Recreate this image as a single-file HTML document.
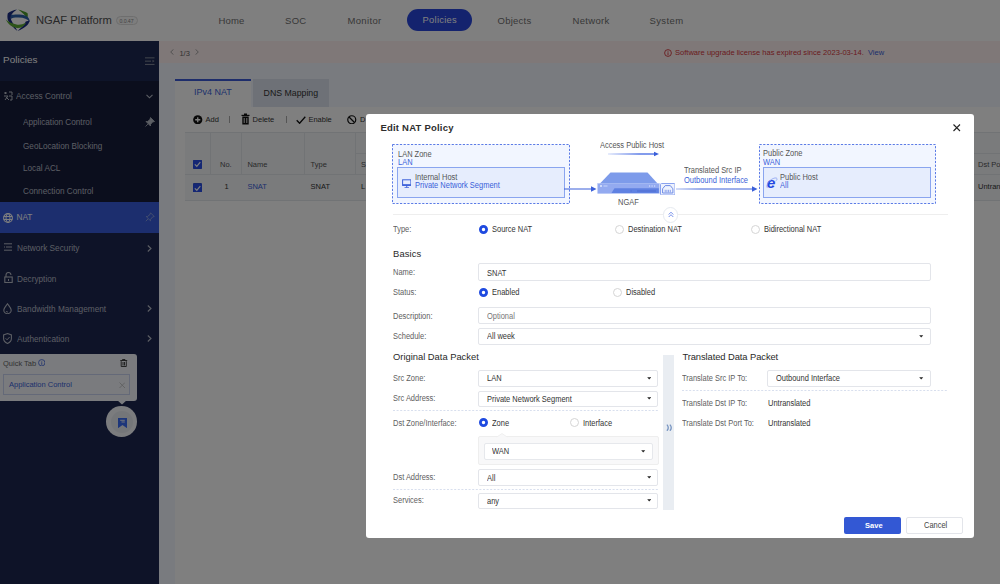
<!DOCTYPE html><html><head><meta charset="utf-8"><style>
html,body{margin:0;padding:0;width:1000px;height:584px;overflow:hidden;background:#fff;}
body{position:relative;font-family:"Liberation Sans",sans-serif;}
.t{position:absolute;white-space:nowrap;}
.b{position:absolute;box-sizing:border-box;}
</style></head><body>
<div class="b" style="left:0.00px;top:0.00px;width:1000.00px;height:41.00px;background:#ffffff;"></div>
<svg class="b" style="left:0px;top:5px;" width="40" height="32" viewBox="0 5 40 32"><path d="M17 9.6 C13.5 10.2 10 11.5 7.8 13.2 C7.2 15.5 7.3 18 7.9 20.2 C10.2 24.2 13.8 28.2 17.4 30.9 C15.5 27.2 12.6 23.4 11.2 20 C10.6 17.8 10.8 15.6 11.8 14.2 C13.3 12.3 15.2 11 17 9.6 Z" fill="#1a2d85"/><path d="M18.2 9.6 C21.8 10.6 25.2 11.8 27.6 13.2 C28 15.2 27.8 17 27.2 18.6 C25.6 15.5 22.2 12.4 18.2 9.6 Z" fill="#4d9a2c"/><path d="M10.8 15 C15 14 22.5 14.2 26.2 15.9 C28.6 17 29.8 19.2 29.6 22 C27.8 19.2 24 17.6 18.6 17.6 C14.8 17.5 12.3 18 10.8 19 Z" fill="#2a5fa8"/><path d="M29.6 20.5 C29.2 24.6 24.5 28.3 17.6 31 C21.2 27.8 24.6 24.8 25.8 21.6 Z" fill="#1a2d85"/><path d="M5.8 19.6 C7.8 24 12 27.4 17 28 C20.8 28.3 24 26.5 26.2 22.8 C22.4 24.6 19.4 25 16.4 24.5 C11.8 23.6 8 21.8 5.8 19.6 Z" fill="#5aa833"/></svg>
<div class="t " style="left:36.00px;top:14.83px;font-size:11.42px;line-height:11.42px;color:#505050;transform:scaleX(0.9814);transform-origin:0 0;">NGAF Platform</div>
<div class="b" style="left:116.00px;top:16.00px;width:21.50px;height:8.50px;border:1px solid #dcdcdc;border-radius:5px;background:#fafafa;"></div>
<div class="t " style="left:119.50px;top:18.70px;font-size:5.20px;line-height:5.20px;color:#888;letter-spacing:-0.076px;">0.0.47</div>
<div class="t " style="left:218.50px;top:16.26px;font-size:9.50px;line-height:9.50px;color:#707070;letter-spacing:0.165px;">Home</div>
<div class="t " style="left:285.00px;top:16.26px;font-size:9.50px;line-height:9.50px;color:#707070;letter-spacing:0.305px;">SOC</div>
<div class="t " style="left:347.50px;top:16.26px;font-size:9.50px;line-height:9.50px;color:#707070;letter-spacing:0.332px;">Monitor</div>
<div class="t " style="left:497.50px;top:16.26px;font-size:9.50px;line-height:9.50px;color:#707070;letter-spacing:0.256px;">Objects</div>
<div class="t " style="left:572.50px;top:16.26px;font-size:9.50px;line-height:9.50px;color:#707070;letter-spacing:0.308px;">Network</div>
<div class="t " style="left:649.50px;top:16.26px;font-size:9.50px;line-height:9.50px;color:#707070;letter-spacing:0.388px;">System</div>
<div class="b" style="left:407.00px;top:9.00px;width:65.00px;height:22.00px;background:#2846dc;border-radius:11px;"></div>
<div class="t " style="left:422.60px;top:16.43px;font-size:9.30px;line-height:9.30px;color:#ffffff;letter-spacing:0.294px;">Policies</div>
<div class="b" style="left:0.00px;top:41.00px;width:159.00px;height:543.00px;background:#1c2650;"></div>
<div class="b" style="left:0.00px;top:41.00px;width:159.00px;height:40.00px;background:#1c2852;"></div>
<div class="t " style="left:3.00px;top:55.43px;font-size:9.89px;line-height:9.89px;color:#ffffff;letter-spacing:0.053px;">Policies</div>
<svg class="b" style="left:145px;top:57px;" width="10" height="9" viewBox="0 0 10 9"><rect x="0" y="0.3" width="9.5" height="1.1" fill="#7d8394"/><rect x="0" y="3.6" width="6" height="1.1" fill="#7d8394"/><rect x="0" y="6.9" width="9.5" height="1.1" fill="#7d8394"/><path d="M7.5 2.8 L9.5 4.1 L7.5 5.4Z" fill="#7d8394"/></svg>
<div class="b" style="left:0.00px;top:81.00px;width:159.00px;height:121.00px;background:#161c3a;"></div>
<div class="t " style="left:16.40px;top:92.37px;font-size:8.66px;line-height:8.66px;color:#b8bcc8;transform:scaleX(0.9596);transform-origin:0 0;">Access Control</div>
<div class="t " style="left:22.60px;top:118.37px;font-size:8.66px;line-height:8.66px;color:#b8bcc8;transform:scaleX(0.9462);transform-origin:0 0;">Application Control</div>
<div class="t " style="left:22.60px;top:141.57px;font-size:8.66px;line-height:8.66px;color:#b8bcc8;transform:scaleX(0.9422);transform-origin:0 0;">GeoLocation Blocking</div>
<div class="t " style="left:22.60px;top:163.97px;font-size:8.66px;line-height:8.66px;color:#b8bcc8;transform:scaleX(0.9471);transform-origin:0 0;">Local ACL</div>
<div class="t " style="left:22.60px;top:187.17px;font-size:8.66px;line-height:8.66px;color:#b8bcc8;transform:scaleX(0.9493);transform-origin:0 0;">Connection Control</div>
<div class="b" style="left:0.00px;top:202.00px;width:159.00px;height:31.00px;background:#385cdc;"></div>
<div class="t " style="left:16.50px;top:214.12px;font-size:8.25px;line-height:8.25px;color:#ffffff;">NAT</div>
<div class="t " style="left:16.50px;top:244.37px;font-size:8.66px;line-height:8.66px;color:#b8bcc8;transform:scaleX(0.9547);transform-origin:0 0;">Network Security</div>
<div class="t " style="left:16.50px;top:274.77px;font-size:8.66px;line-height:8.66px;color:#b8bcc8;transform:scaleX(0.9516);transform-origin:0 0;">Decryption</div>
<div class="t " style="left:16.50px;top:304.87px;font-size:8.66px;line-height:8.66px;color:#b8bcc8;transform:scaleX(0.9548);transform-origin:0 0;">Bandwidth Management</div>
<div class="t " style="left:16.50px;top:335.07px;font-size:8.66px;line-height:8.66px;color:#b8bcc8;transform:scaleX(0.9526);transform-origin:0 0;">Authentication</div>
<div class="b" style="left:159.00px;top:41.00px;width:841.00px;height:543.00px;background:#f2f6ff;"></div>
<div class="b" style="left:159.00px;top:41.00px;width:841.00px;height:22.00px;background:#fff1f1;"></div>
<div class="t " style="left:179.40px;top:49.55px;font-size:7.50px;line-height:7.50px;color:#666;">1/3</div>
<div class="t " style="left:675.00px;top:48.61px;font-size:7.55px;line-height:7.55px;color:#d4363c;">Software upgrade license has expired since 2023-03-14.</div>
<div class="t " style="left:868.00px;top:48.65px;font-size:7.50px;line-height:7.50px;color:#3a5fd9;">View</div>
<div class="b" style="left:253.00px;top:79.00px;width:75.50px;height:28.00px;background:#dce2ee;"></div>
<div class="t " style="left:263.60px;top:89.09px;font-size:8.75px;line-height:8.75px;color:#333;">DNS Mapping</div>
<div class="b" style="left:175.00px;top:79.00px;width:76.00px;height:28.00px;background:#ffffff;border-top:2px solid #3d5bd6;"></div>
<div class="t " style="left:193.50px;top:88.40px;font-size:9.28px;line-height:9.28px;color:#3a5fd9;transform:scaleX(0.9680);transform-origin:0 0;">IPv4 NAT</div>
<div class="b" style="left:175.00px;top:107.00px;width:825.00px;height:477.00px;background:#ffffff;"></div>
<div class="t " style="left:205.60px;top:116.15px;font-size:7.50px;line-height:7.50px;color:#333;">Add</div>
<div class="t " style="left:252.60px;top:116.15px;font-size:7.50px;line-height:7.50px;color:#333;">Delete</div>
<div class="t " style="left:308.40px;top:116.15px;font-size:7.50px;line-height:7.50px;color:#333;">Enable</div>
<div class="b" style="left:185.00px;top:132.00px;width:815.00px;height:69.00px;background:#f4f6f9;border-top:1px solid #e3e6eb;border-bottom:1px solid #e3e6eb;"></div>
<div class="b" style="left:185.00px;top:174.00px;width:815.00px;height:1.00px;background:#e3e6eb;"></div>
<div class="b" style="left:209.60px;top:132.00px;width:1.00px;height:42.00px;background:#e3e6eb;"></div>
<div class="b" style="left:241.40px;top:132.00px;width:1.00px;height:42.00px;background:#e3e6eb;"></div>
<div class="b" style="left:304.40px;top:132.00px;width:1.00px;height:42.00px;background:#e3e6eb;"></div>
<div class="b" style="left:355.40px;top:132.00px;width:1.00px;height:42.00px;background:#e3e6eb;"></div>
<div class="b" style="left:355.40px;top:153.00px;width:644.60px;height:1.00px;background:#e3e6eb;"></div>
<div class="t " style="left:220.00px;top:160.75px;font-size:7.50px;line-height:7.50px;color:#555;">No.</div>
<div class="t " style="left:247.40px;top:160.75px;font-size:7.50px;line-height:7.50px;color:#555;">Name</div>
<div class="t " style="left:310.60px;top:160.75px;font-size:7.50px;line-height:7.50px;color:#555;">Type</div>
<div class="t " style="left:361.00px;top:160.75px;font-size:7.50px;line-height:7.50px;color:#555;">S</div>
<div class="t " style="left:224.40px;top:183.15px;font-size:7.50px;line-height:7.50px;color:#333;">1</div>
<div class="t " style="left:247.40px;top:183.15px;font-size:7.50px;line-height:7.50px;color:#3a5fd9;">SNAT</div>
<div class="t " style="left:310.60px;top:183.15px;font-size:7.50px;line-height:7.50px;color:#333;">SNAT</div>
<div class="t " style="left:361.00px;top:183.15px;font-size:7.50px;line-height:7.50px;color:#333;">L</div>
<div class="t " style="left:978.00px;top:160.75px;font-size:7.50px;line-height:7.50px;color:#555;">Dst Po</div>
<div class="t " style="left:978.00px;top:183.15px;font-size:7.50px;line-height:7.50px;color:#333;">Untranslated</div>
<div class="b" style="left:193.00px;top:160.00px;width:9.00px;height:9.00px;background:#3050d0;border-radius:1px;"></div>
<div class="b" style="left:193.00px;top:183.40px;width:9.00px;height:9.00px;background:#3050d0;border-radius:1px;"></div>
<div class="b" style="left:0.00px;top:353.50px;width:137.00px;height:47.50px;background:#f4f7fd;border-radius:0 3px 3px 0;"></div>
<div class="t " style="left:3.00px;top:359.95px;font-size:7.50px;line-height:7.50px;color:#666;">Quick Tab</div>
<div class="b" style="left:3.00px;top:374.00px;width:127.00px;height:21.00px;border:1px solid #c9d3f0;background:#f4f7fd;"></div>
<div class="t " style="left:9.00px;top:381.15px;font-size:7.50px;line-height:7.50px;color:#3a5fd9;">Application Control</div>
<div class="b" style="left:106.20px;top:406.40px;width:30.60px;height:30.60px;background:#f6f8fc;border-radius:50%;"></div>
<div class="b" style="left:110.50px;top:410.70px;width:22.00px;height:22.00px;background:#e9ecf2;border-radius:50%;"></div>
<svg class="b" style="left:117.5px;top:417.8px;" width="9" height="10.2" viewBox="0 0 9 10.2"><path d="M0 0 H9 V10.2 L4.5 7 L0 10.2 Z" fill="#3a6cf5"/><path d="M2.2 2.3h4.6M3.5 4h3.3" stroke="#f6f8fc" stroke-width="0.9"/></svg>
<svg class="b" style="left:3px;top:91px;" width="10" height="10" viewBox="0 0 10 10"><path d="M1 2h3M2.5 1v2M1 5h4L2 9M3 6l3 3M6 1h3v3M6 5h3v4h-2" fill="none" stroke="#b8bcc8" stroke-width="1"/></svg>
<svg class="b" style="left:146px;top:94px;" width="7" height="5" viewBox="0 0 7 5"><path d="M0.5 0.8 L3.5 3.8 L6.5 0.8" fill="none" stroke="#b8bcc8" stroke-width="1.1"/></svg>
<svg class="b" style="left:145px;top:117px;" width="10" height="10" viewBox="0 0 10 10"><path d="M5.5 0.5 L9.5 4.5 L7.5 5 L5.5 7.5 L5.5 9 L1 4.5 L2.5 4.5 L5 2.5 Z M3 7 L0.5 9.5" fill="#b8bcc8" stroke="#b8bcc8" stroke-width="0.8"/></svg>
<svg class="b" style="left:2.5px;top:213px;" width="10" height="10" viewBox="0 0 10 10"><circle cx="5" cy="5" r="4.4" fill="none" stroke="#fff" stroke-width="1.1"/><ellipse cx="5" cy="5" rx="2" ry="4.4" fill="none" stroke="#fff" stroke-width="1"/><path d="M0.8 3.5h8.4M0.8 6.5h8.4" stroke="#fff" stroke-width="1"/></svg>
<svg class="b" style="left:145px;top:212px;" width="10" height="10" viewBox="0 0 10 10"><path d="M5.5 0.8 L9.2 4.5 L7.5 5 L5.5 7.5 L5.5 8.8 L1.2 4.5 L2.5 4.5 L5 2.5 Z M3 7 L0.8 9.2" fill="none" stroke="#8fa3e0" stroke-width="0.9"/></svg>
<svg class="b" style="left:3.5px;top:243px;" width="8" height="8" viewBox="0 0 8 8"><path d="M0 0.8h8M2 4h6M0 7.2h8" stroke="#b8bcc8" stroke-width="1"/><path d="M0 4h1" stroke="#b8bcc8" stroke-width="1"/></svg>
<svg class="b" style="left:147px;top:244.5px;" width="5" height="7" viewBox="0 0 5 7"><path d="M0.8 0.5 L4 3.5 L0.8 6.5" fill="none" stroke="#b8bcc8" stroke-width="1.1"/></svg>
<svg class="b" style="left:147px;top:305px;" width="5" height="7" viewBox="0 0 5 7"><path d="M0.8 0.5 L4 3.5 L0.8 6.5" fill="none" stroke="#b8bcc8" stroke-width="1.1"/></svg>
<svg class="b" style="left:147px;top:335px;" width="5" height="7" viewBox="0 0 5 7"><path d="M0.8 0.5 L4 3.5 L0.8 6.5" fill="none" stroke="#b8bcc8" stroke-width="1.1"/></svg>
<svg class="b" style="left:3.5px;top:272px;" width="9" height="11" viewBox="0 0 9 11"><path d="M2 5 V3 A2.5 2.5 0 0 1 7 3" fill="none" stroke="#b8bcc8" stroke-width="1.1"/><rect x="0.8" y="5" width="7.4" height="5.5" fill="none" stroke="#b8bcc8" stroke-width="1.1"/><rect x="4" y="7" width="1" height="2" fill="#b8bcc8"/></svg>
<svg class="b" style="left:3px;top:303px;" width="9" height="11" viewBox="0 0 9 11"><path d="M4.5 0.8 C6 3 8.2 5 8.2 7 A3.7 3.7 0 0 1 0.8 7 C0.8 5 3 3 4.5 0.8 Z" fill="none" stroke="#b8bcc8" stroke-width="1.1"/><path d="M3 8 A1.8 1.8 0 0 0 5 9" fill="none" stroke="#b8bcc8" stroke-width="0.9"/></svg>
<svg class="b" style="left:3px;top:333px;" width="9" height="11" viewBox="0 0 9 11"><path d="M4.5 0.6 L8.4 2 V5.5 C8.4 8 6.5 9.6 4.5 10.4 C2.5 9.6 0.6 8 0.6 5.5 V2 Z" fill="none" stroke="#b8bcc8" stroke-width="1.1"/><path d="M2.6 5.3 L4.1 6.8 L6.6 4" fill="none" stroke="#b8bcc8" stroke-width="1"/></svg>
<svg class="b" style="left:170px;top:49px;" width="4" height="6" viewBox="0 0 4 6"><path d="M3.5 0.3 L0.7 3 L3.5 5.7" fill="none" stroke="#999" stroke-width="0.9"/></svg>
<svg class="b" style="left:195px;top:49px;" width="4" height="6" viewBox="0 0 4 6"><path d="M0.5 0.3 L3.3 3 L0.5 5.7" fill="none" stroke="#999" stroke-width="0.9"/></svg>
<svg class="b" style="left:663.5px;top:48.5px;" width="8" height="8" viewBox="0 0 8 8"><circle cx="4" cy="4" r="3.4" fill="none" stroke="#d4363c" stroke-width="0.9"/><path d="M4 3.3v2.8M4 1.9v0.8" stroke="#d4363c" stroke-width="0.9"/></svg>
<svg class="b" style="left:193px;top:114.5px;" width="9.5" height="9.5" viewBox="0 0 9.5 9.5"><circle cx="4.75" cy="4.75" r="4.6" fill="#111"/><path d="M4.75 2.2v5.1M2.2 4.75h5.1" stroke="#fff" stroke-width="1.3"/></svg>
<div class="b" style="left:229.20px;top:116.00px;width:0.70px;height:7.00px;background:#aaa;"></div>
<svg class="b" style="left:240.6px;top:113px;" width="9" height="12" viewBox="0 0 9 12"><rect x="0.5" y="1.8" width="8" height="1.2" fill="#111"/><rect x="3" y="0.5" width="3" height="1.5" fill="#111"/><rect x="1.3" y="3.5" width="6.4" height="8" fill="#111"/><path d="M3.2 5v5M5.8 5v5" stroke="#fff" stroke-width="0.9"/></svg>
<div class="b" style="left:285.50px;top:116.00px;width:0.70px;height:7.00px;background:#aaa;"></div>
<svg class="b" style="left:295.6px;top:115.5px;" width="10" height="8.5" viewBox="0 0 10 8.5"><path d="M0.7 4.2 L3.6 7.3 L9.3 0.8" fill="none" stroke="#111" stroke-width="1.3"/></svg>
<svg class="b" style="left:347.3px;top:114.5px;" width="9.5" height="9.5" viewBox="0 0 9.5 9.5"><circle cx="4.75" cy="4.75" r="4" fill="none" stroke="#111" stroke-width="1.2"/><path d="M2 2 L7.5 7.5" stroke="#111" stroke-width="1.2"/></svg>
<div class="t " style="left:359.90px;top:116.15px;font-size:7.50px;line-height:7.50px;color:#333;">D</div>
<svg class="b" style="left:193px;top:159.9px;" width="9" height="8.7" viewBox="0 0 9 8.7"><rect x="0" y="0" width="9" height="8.7" rx="1.3" fill="#2a4fe8"/><path d="M1.8 4.4 L3.8 6.3 L7.3 2.2" fill="none" stroke="#fff" stroke-width="1.2"/></svg>
<svg class="b" style="left:193px;top:183.8px;" width="9" height="8.7" viewBox="0 0 9 8.7"><rect x="0" y="0" width="9" height="8.7" rx="1.3" fill="#2a4fe8"/><path d="M1.8 4.4 L3.8 6.3 L7.3 2.2" fill="none" stroke="#fff" stroke-width="1.2"/></svg>
<svg class="b" style="left:37.8px;top:358.8px;" width="7.5" height="7.5" viewBox="0 0 7.5 7.5"><circle cx="3.75" cy="3.75" r="3.2" fill="none" stroke="#3a5fd9" stroke-width="0.8"/><path d="M3.75 3.2v2.6M3.75 1.9v0.7" stroke="#3a5fd9" stroke-width="0.8"/></svg>
<svg class="b" style="left:120.3px;top:359px;" width="7.5" height="8" viewBox="0 0 7.5 8"><path d="M0.3 1.5h6.9M2.5 1.5V0.5h2.5v1M1.2 2.2 V7.5 H6.3 V2.2 M3 3v3.5M4.5 3v3.5" fill="none" stroke="#333" stroke-width="0.9"/></svg>
<svg class="b" style="left:118.5px;top:381.5px;" width="6.5" height="6.5" viewBox="0 0 6.5 6.5"><path d="M0.5 0.5 L6 6 M6 0.5 L0.5 6" stroke="#bbb" stroke-width="0.8"/></svg>
<svg class="b" style="left:117px;top:400px;" width="10" height="5" viewBox="0 0 10 5"><path d="M0 0 L5 4.5 L10 0 Z" fill="#f4f7fd"/></svg>
<div class="b" style="left:0.00px;top:0.00px;width:1000.00px;height:584.00px;background:rgba(0,0,0,0.5);"></div>
<div class="b" style="left:366.00px;top:114.00px;width:608.00px;height:424.00px;background:#ffffff;border-radius:3px;"></div>
<div class="t " style="left:380.40px;top:122.66px;font-size:9.50px;line-height:9.50px;color:#2e2e2e;font-weight:bold;letter-spacing:0.218px;">Edit NAT Policy</div>
<svg class="b" style="left:392px;top:144px;" width="178" height="60" viewBox="0 0 178 60"><rect x="0.5" y="0.5" width="177" height="59" fill="#f2f6ff" stroke="#5b7be6" stroke-width="1" stroke-dasharray="2.2 1.5"/></svg>
<div class="t " style="left:397.70px;top:149.69px;font-size:8.40px;line-height:8.40px;color:#555;transform:scaleX(0.8929);transform-origin:0 0;">LAN Zone</div>
<div class="t " style="left:397.70px;top:157.79px;font-size:8.40px;line-height:8.40px;color:#3a5fd9;transform:scaleX(0.8929);transform-origin:0 0;">LAN</div>
<div class="b" style="left:397.00px;top:167.00px;width:167.50px;height:31.00px;background:#e6edfd;border:1px solid #8aa5ef;"></div>
<div class="t " style="left:414.70px;top:173.39px;font-size:8.40px;line-height:8.40px;color:#555;transform:scaleX(0.8929);transform-origin:0 0;">Internal Host</div>
<div class="t " style="left:414.70px;top:181.39px;font-size:8.40px;line-height:8.40px;color:#3a5fd9;transform:scaleX(0.8929);transform-origin:0 0;">Private Network Segment</div>
<svg class="b" style="left:759px;top:144px;" width="177" height="60" viewBox="0 0 177 60"><rect x="0.5" y="0.5" width="176" height="59" fill="#f2f6ff" stroke="#5b7be6" stroke-width="1" stroke-dasharray="2.2 1.5"/></svg>
<div class="t " style="left:763.20px;top:149.19px;font-size:8.40px;line-height:8.40px;color:#555;transform:scaleX(0.8929);transform-origin:0 0;">Public Zone</div>
<div class="t " style="left:763.20px;top:157.69px;font-size:8.40px;line-height:8.40px;color:#3a5fd9;transform:scaleX(0.8929);transform-origin:0 0;">WAN</div>
<div class="b" style="left:763.20px;top:167.40px;width:167.50px;height:30.50px;background:#e6edfd;border:1px solid #8aa5ef;"></div>
<div class="t " style="left:780.20px;top:173.39px;font-size:8.40px;line-height:8.40px;color:#555;transform:scaleX(0.8929);transform-origin:0 0;">Public Host</div>
<div class="t " style="left:780.20px;top:181.39px;font-size:8.40px;line-height:8.40px;color:#3a5fd9;transform:scaleX(0.8929);transform-origin:0 0;">All</div>
<div class="t " style="left:599.80px;top:140.69px;font-size:8.40px;line-height:8.40px;color:#555;transform:scaleX(0.8929);transform-origin:0 0;">Access Public Host</div>
<div class="t " style="left:618.20px;top:197.69px;font-size:8.40px;line-height:8.40px;color:#555;transform:scaleX(0.8929);transform-origin:0 0;">NGAF</div>
<div class="t " style="left:684.20px;top:166.19px;font-size:8.40px;line-height:8.40px;color:#555;transform:scaleX(0.8929);transform-origin:0 0;">Translated Src IP</div>
<div class="t " style="left:684.20px;top:176.19px;font-size:8.40px;line-height:8.40px;color:#3a5fd9;transform:scaleX(0.8929);transform-origin:0 0;">Outbound Interface</div>
<div class="b" style="left:393.00px;top:213.50px;width:555.00px;height:1.00px;background:#eeeeee;"></div>
<div class="t " style="left:393.00px;top:225.19px;font-size:8.40px;line-height:8.40px;color:#606060;transform:scaleX(0.8929);transform-origin:0 0;">Type:</div>
<div class="t " style="left:492.20px;top:225.19px;font-size:8.40px;line-height:8.40px;color:#333;transform:scaleX(0.8929);transform-origin:0 0;">Source NAT</div>
<div class="t " style="left:628.20px;top:225.19px;font-size:8.40px;line-height:8.40px;color:#333;transform:scaleX(0.8929);transform-origin:0 0;">Destination NAT</div>
<div class="t " style="left:764.20px;top:225.19px;font-size:8.40px;line-height:8.40px;color:#333;transform:scaleX(0.8929);transform-origin:0 0;">Bidirectional NAT</div>
<div class="t " style="left:393.00px;top:249.34px;font-size:9.40px;line-height:9.40px;color:#2a2a2a;letter-spacing:0.136px;">Basics</div>
<div class="t " style="left:393.00px;top:268.39px;font-size:8.40px;line-height:8.40px;color:#606060;transform:scaleX(0.8929);transform-origin:0 0;">Name:</div>
<div class="b" style="left:478.30px;top:263.30px;width:453.20px;height:18.10px;border:1px solid #e3e5ea;border-radius:2px;"></div>
<div class="t " style="left:486.60px;top:268.99px;font-size:8.40px;line-height:8.40px;color:#333;transform:scaleX(0.8929);transform-origin:0 0;">SNAT</div>
<div class="t " style="left:393.00px;top:288.39px;font-size:8.40px;line-height:8.40px;color:#606060;transform:scaleX(0.8929);transform-origin:0 0;">Status:</div>
<div class="t " style="left:491.90px;top:288.39px;font-size:8.40px;line-height:8.40px;color:#333;transform:scaleX(0.8929);transform-origin:0 0;">Enabled</div>
<div class="t " style="left:626.40px;top:288.39px;font-size:8.40px;line-height:8.40px;color:#333;transform:scaleX(0.8929);transform-origin:0 0;">Disabled</div>
<div class="t " style="left:393.00px;top:311.79px;font-size:8.40px;line-height:8.40px;color:#606060;transform:scaleX(0.8929);transform-origin:0 0;">Description:</div>
<div class="b" style="left:478.30px;top:307.20px;width:453.20px;height:17.10px;border:1px solid #e3e5ea;border-radius:2px;"></div>
<div class="t " style="left:486.60px;top:312.29px;font-size:8.40px;line-height:8.40px;color:#777;transform:scaleX(0.8929);transform-origin:0 0;">Optional</div>
<div class="t " style="left:393.00px;top:332.39px;font-size:8.40px;line-height:8.40px;color:#606060;transform:scaleX(0.8929);transform-origin:0 0;">Schedule:</div>
<div class="b" style="left:478.30px;top:327.50px;width:453.20px;height:17.00px;border:1px solid #e3e5ea;border-radius:2px;"></div>
<div class="t " style="left:486.60px;top:332.39px;font-size:8.40px;line-height:8.40px;color:#333;transform:scaleX(0.8929);transform-origin:0 0;">All week</div>
<div class="t " style="left:393.00px;top:352.04px;font-size:9.40px;line-height:9.40px;color:#2a2a2a;letter-spacing:-0.010px;">Original Data Packet</div>
<div class="t " style="left:393.00px;top:374.19px;font-size:8.40px;line-height:8.40px;color:#606060;transform:scaleX(0.8929);transform-origin:0 0;">Src Zone:</div>
<div class="b" style="left:478.30px;top:369.90px;width:180.10px;height:17.60px;border:1px solid #e3e5ea;border-radius:2px;"></div>
<div class="t " style="left:486.60px;top:374.39px;font-size:8.40px;line-height:8.40px;color:#333;transform:scaleX(0.8929);transform-origin:0 0;">LAN</div>
<div class="t " style="left:393.00px;top:394.39px;font-size:8.40px;line-height:8.40px;color:#606060;transform:scaleX(0.8929);transform-origin:0 0;">Src Address:</div>
<div class="b" style="left:478.30px;top:390.60px;width:180.10px;height:16.80px;border:1px solid #e3e5ea;border-radius:2px;"></div>
<div class="t " style="left:486.60px;top:394.89px;font-size:8.40px;line-height:8.40px;color:#333;transform:scaleX(0.8929);transform-origin:0 0;">Private Network Segment</div>
<svg class="b" style="left:393px;top:410px;" width="266" height="1" viewBox="0 0 266 1"><path d="M0 0.5 H266" stroke="#d8dfee" stroke-width="1" stroke-dasharray="2 1.6"/></svg>
<div class="t " style="left:393.00px;top:418.69px;font-size:8.40px;line-height:8.40px;color:#606060;transform:scaleX(0.8929);transform-origin:0 0;">Dst Zone/Interface:</div>
<div class="t " style="left:491.90px;top:418.69px;font-size:8.40px;line-height:8.40px;color:#333;transform:scaleX(0.8929);transform-origin:0 0;">Zone</div>
<div class="t " style="left:582.80px;top:418.69px;font-size:8.40px;line-height:8.40px;color:#333;transform:scaleX(0.8929);transform-origin:0 0;">Interface</div>
<div class="b" style="left:478.30px;top:436.10px;width:180.30px;height:29.10px;background:#f8f8f9;border:1px solid #eeeeee;border-radius:2px;"></div>
<div class="b" style="left:484.40px;top:442.50px;width:168.80px;height:17.10px;background:#fff;border:1px solid #e6e8ec;border-radius:2px;"></div>
<div class="t " style="left:491.90px;top:446.89px;font-size:8.40px;line-height:8.40px;color:#333;transform:scaleX(0.8929);transform-origin:0 0;">WAN</div>
<div class="t " style="left:393.00px;top:473.39px;font-size:8.40px;line-height:8.40px;color:#606060;transform:scaleX(0.8929);transform-origin:0 0;">Dst Address:</div>
<div class="b" style="left:478.30px;top:469.10px;width:180.10px;height:16.50px;border:1px solid #e3e5ea;border-radius:2px;"></div>
<div class="t " style="left:486.60px;top:473.89px;font-size:8.40px;line-height:8.40px;color:#333;transform:scaleX(0.8929);transform-origin:0 0;">All</div>
<svg class="b" style="left:393px;top:489px;" width="266" height="1" viewBox="0 0 266 1"><path d="M0 0.5 H266" stroke="#d8dfee" stroke-width="1" stroke-dasharray="2 1.6"/></svg>
<div class="t " style="left:393.00px;top:496.29px;font-size:8.40px;line-height:8.40px;color:#606060;transform:scaleX(0.8929);transform-origin:0 0;">Services:</div>
<div class="b" style="left:478.30px;top:492.50px;width:180.10px;height:16.80px;border:1px solid #e3e5ea;border-radius:2px;"></div>
<div class="t " style="left:486.60px;top:496.89px;font-size:8.40px;line-height:8.40px;color:#333;transform:scaleX(0.8929);transform-origin:0 0;">any</div>
<div class="b" style="left:663.20px;top:355.20px;width:11.20px;height:154.90px;background:#e9edf2;"></div>
<svg class="b" style="left:665.5px;top:423.8px;" width="7" height="7.4" viewBox="0 0 7 7.4"><path d="M0.9 0.6 Q3.6 3.7 0.9 6.8 M3.9 0.6 Q6.6 3.7 3.9 6.8" fill="none" stroke="#7895c2" stroke-width="1.3"/></svg>
<div class="t " style="left:682.40px;top:352.04px;font-size:9.40px;line-height:9.40px;color:#2a2a2a;letter-spacing:-0.085px;">Translated Data Packet</div>
<div class="t " style="left:682.40px;top:374.19px;font-size:8.40px;line-height:8.40px;color:#606060;transform:scaleX(0.8929);transform-origin:0 0;">Translate Src IP To:</div>
<div class="b" style="left:767.10px;top:369.60px;width:164.40px;height:17.50px;border:1px solid #e3e5ea;border-radius:2px;"></div>
<div class="t " style="left:775.50px;top:374.39px;font-size:8.40px;line-height:8.40px;color:#333;transform:scaleX(0.8929);transform-origin:0 0;">Outbound Interface</div>
<svg class="b" style="left:682px;top:390px;" width="266" height="1" viewBox="0 0 266 1"><path d="M0 0.5 H266" stroke="#d8dfee" stroke-width="1" stroke-dasharray="2 1.6"/></svg>
<div class="t " style="left:682.40px;top:398.59px;font-size:8.40px;line-height:8.40px;color:#606060;transform:scaleX(0.8929);transform-origin:0 0;">Translate Dst IP To:</div>
<div class="t " style="left:767.60px;top:398.59px;font-size:8.40px;line-height:8.40px;color:#333;transform:scaleX(0.8929);transform-origin:0 0;">Untranslated</div>
<div class="t " style="left:682.40px;top:418.59px;font-size:8.40px;line-height:8.40px;color:#606060;transform:scaleX(0.8929);transform-origin:0 0;">Translate Dst Port To:</div>
<div class="t " style="left:767.60px;top:418.59px;font-size:8.40px;line-height:8.40px;color:#333;transform:scaleX(0.8929);transform-origin:0 0;">Untranslated</div>
<div class="b" style="left:844.00px;top:516.50px;width:57.00px;height:17.50px;background:#3358d4;border-radius:2px;"></div>
<div class="t " style="left:864.70px;top:522.02px;font-size:7.65px;line-height:7.65px;color:#fff;font-weight:bold;transform:scaleX(0.9851);transform-origin:0 0;">Save</div>
<div class="b" style="left:906.00px;top:516.50px;width:57.00px;height:17.50px;background:#fff;border:1px solid #e3e5ea;border-radius:2px;"></div>
<div class="t " style="left:923.90px;top:521.39px;font-size:8.40px;line-height:8.40px;color:#444;transform:scaleX(0.8929);transform-origin:0 0;">Cancel</div>
<svg class="b" style="left:953px;top:124px;" width="7.5" height="7.5" viewBox="0 0 7.5 7.5"><path d="M0.5 0.5 L7 7 M7 0.5 L0.5 7" stroke="#222" stroke-width="1.1"/></svg>
<svg class="b" style="left:401.5px;top:178.5px;" width="9.5" height="9.5" viewBox="0 0 9.5 9.5"><rect x="0.6" y="0.8" width="8.3" height="5.6" fill="none" stroke="#3a5fd9" stroke-width="1"/><rect x="0.6" y="5.2" width="8.3" height="1.3" fill="#3a5fd9"/><path d="M4.75 6.5v2M2.5 8.8h4.5" stroke="#3a5fd9" stroke-width="1"/></svg>
<div class="t " style="left:766.80px;top:174.98px;font-size:15.50px;line-height:15.50px;color:#2346e0;font-weight:bold;font-style:italic;">e</div>
<svg class="b" style="left:766px;top:177px;" width="12" height="12" viewBox="0 0 12 12"><path d="M1.3 10.8 C0.2 9 1.8 5 5.2 2.6 C7.8 0.8 10.6 0.4 11 1.6 C11.3 2.4 10.5 3.4 9.6 4.2" fill="none" stroke="#7d95ef" stroke-width="0.7"/></svg>
<svg class="b" style="left:564px;top:185.5px;" width="33" height="6" viewBox="0 0 33 6"><path d="M0 3 H28" stroke="#3a5fd9" stroke-width="1"/><path d="M27 0.2 L32.5 3 L27 5.8 Z" fill="#3a5fd9"/></svg>
<svg class="b" style="left:676px;top:185.5px;" width="82" height="6" viewBox="0 0 82 6"><defs><linearGradient id="ga" gradientUnits="userSpaceOnUse" x1="0" y1="0" x2="82" y2="0"><stop offset="0" stop-color="#a9baf0"/><stop offset="0.3" stop-color="#3a5fd9"/></linearGradient></defs><path d="M0 3 H77" stroke="url(#ga)" stroke-width="1"/><path d="M76 0.2 L81.5 3 L76 5.8 Z" fill="#3a5fd9"/></svg>
<svg class="b" style="left:607.5px;top:151px;" width="52" height="6" viewBox="0 0 52 6"><defs><linearGradient id="gb" gradientUnits="userSpaceOnUse" x1="0" y1="0" x2="52" y2="0"><stop offset="0" stop-color="#dfe6fb"/><stop offset="0.6" stop-color="#5a7be6"/></linearGradient></defs><path d="M0 3 H47" stroke="url(#gb)" stroke-width="1.3"/><path d="M46 0.8 L51 3 L46 5.2 Z" fill="#3a5fd9"/></svg>
<svg class="b" style="left:596.5px;top:171.5px;" width="63" height="22" viewBox="0 0 63 22"><path d="M13.5 0.5 H50.5 L61 12 H2.5 Z" fill="#7d9bea"/><rect x="0.7" y="11.5" width="61.6" height="10" fill="#93aaf0"/><path d="M17.5 16.3 H61.8 V21 H14.5 Z" fill="#5f81e2"/><rect x="0.7" y="11.5" width="61.6" height="10" fill="none" stroke="#b5c5f5" stroke-width="0.6"/><circle cx="4" cy="14" r="1" fill="#e0e8ff"/><rect x="6.5" y="13.5" width="4" height="1" fill="#c8d5fb"/><rect x="52" y="13.5" width="1.2" height="1" fill="#e0e8ff"/><rect x="54.5" y="13.5" width="1.2" height="1" fill="#e0e8ff"/><rect x="57" y="13.5" width="1.2" height="1" fill="#e0e8ff"/><rect x="40" y="18.6" width="19" height="0.8" fill="#4a68cc"/><rect x="33.5" y="18.6" width="1.2" height="0.8" fill="#4a68cc"/></svg>
<svg class="b" style="left:659.5px;top:182.5px;" width="15.5" height="12.5" viewBox="0 0 15.5 12.5"><rect x="0.5" y="0.5" width="14.5" height="11.5" rx="1" fill="#eef2fd" stroke="#8aa3ef" stroke-width="1"/><path d="M2.6 10 V5.8 L5.2 2.6 H10.3 L12.9 5.8 V10 Z" fill="none" stroke="#6f8ce6" stroke-width="1"/><path d="M5.2 6.8v2.6M6.9 6.8v2.6M8.6 6.8v2.6M10.3 6.8v2.6" stroke="#6f8ce6" stroke-width="0.8"/></svg>
<div class="b" style="left:662.60px;top:207.00px;width:15.80px;height:15.80px;background:#fff;border:1px solid #e6eaf0;border-radius:50%;"></div>
<svg class="b" style="left:667.5px;top:211px;" width="6" height="7" viewBox="0 0 6 7"><path d="M0.7 3.5 L3 1.2 L5.3 3.5 M0.7 6 L3 3.7 L5.3 6" fill="none" stroke="#6a86e8" stroke-width="0.9"/></svg>
<svg class="b" style="left:478.8px;top:225px;" width="9" height="9" viewBox="0 0 9 9"><circle cx="4.5" cy="4.5" r="3.1" fill="none" stroke="#1f4ae0" stroke-width="2.8"/></svg>
<svg class="b" style="left:615.2px;top:224.8px;" width="9" height="9" viewBox="0 0 9 9"><circle cx="4.5" cy="4.5" r="4" fill="#fff" stroke="#d4d4d4" stroke-width="1"/></svg>
<svg class="b" style="left:751.2px;top:224.8px;" width="9" height="9" viewBox="0 0 9 9"><circle cx="4.5" cy="4.5" r="4" fill="#fff" stroke="#d4d4d4" stroke-width="1"/></svg>
<svg class="b" style="left:478.8px;top:288.1px;" width="9" height="9" viewBox="0 0 9 9"><circle cx="4.5" cy="4.5" r="3.1" fill="none" stroke="#1f4ae0" stroke-width="2.8"/></svg>
<svg class="b" style="left:612.6px;top:287.7px;" width="9" height="9" viewBox="0 0 9 9"><circle cx="4.5" cy="4.5" r="4" fill="#fff" stroke="#d4d4d4" stroke-width="1"/></svg>
<svg class="b" style="left:478.8px;top:417.8px;" width="9" height="9" viewBox="0 0 9 9"><circle cx="4.5" cy="4.5" r="3.1" fill="none" stroke="#1f4ae0" stroke-width="2.8"/></svg>
<svg class="b" style="left:569.5px;top:417.8px;" width="9" height="9" viewBox="0 0 9 9"><circle cx="4.5" cy="4.5" r="4" fill="#fff" stroke="#d4d4d4" stroke-width="1"/></svg>
<svg class="b" style="left:919.3px;top:335.2px;" width="4.5" height="3" viewBox="0 0 4.5 3"><path d="M0.2 0.2 L4.2 0.2 L2.2 2.6 Z" fill="#222"/></svg>
<svg class="b" style="left:646.8px;top:377.09999999999997px;" width="4.5" height="3" viewBox="0 0 4.5 3"><path d="M0.2 0.2 L4.2 0.2 L2.2 2.6 Z" fill="#222"/></svg>
<svg class="b" style="left:646.8px;top:397.4px;" width="4.5" height="3" viewBox="0 0 4.5 3"><path d="M0.2 0.2 L4.2 0.2 L2.2 2.6 Z" fill="#222"/></svg>
<svg class="b" style="left:641.3px;top:449.7px;" width="4.5" height="3" viewBox="0 0 4.5 3"><path d="M0.2 0.2 L4.2 0.2 L2.2 2.6 Z" fill="#222"/></svg>
<svg class="b" style="left:646.8px;top:475.7px;" width="4.5" height="3" viewBox="0 0 4.5 3"><path d="M0.2 0.2 L4.2 0.2 L2.2 2.6 Z" fill="#222"/></svg>
<svg class="b" style="left:646.8px;top:499.2px;" width="4.5" height="3" viewBox="0 0 4.5 3"><path d="M0.2 0.2 L4.2 0.2 L2.2 2.6 Z" fill="#222"/></svg>
<svg class="b" style="left:919.3px;top:377.2px;" width="4.5" height="3" viewBox="0 0 4.5 3"><path d="M0.2 0.2 L4.2 0.2 L2.2 2.6 Z" fill="#222"/></svg>
<svg class="b" style="left:496px;top:432.5px;" width="12" height="5" viewBox="0 0 12 5"><path d="M0 4.6 L6 0.5 L12 4.6" fill="#f8f8f9" stroke="#eeeeee" stroke-width="0.8"/><rect x="0" y="4.2" width="12" height="1" fill="#f8f8f9"/></svg>
</body></html>
